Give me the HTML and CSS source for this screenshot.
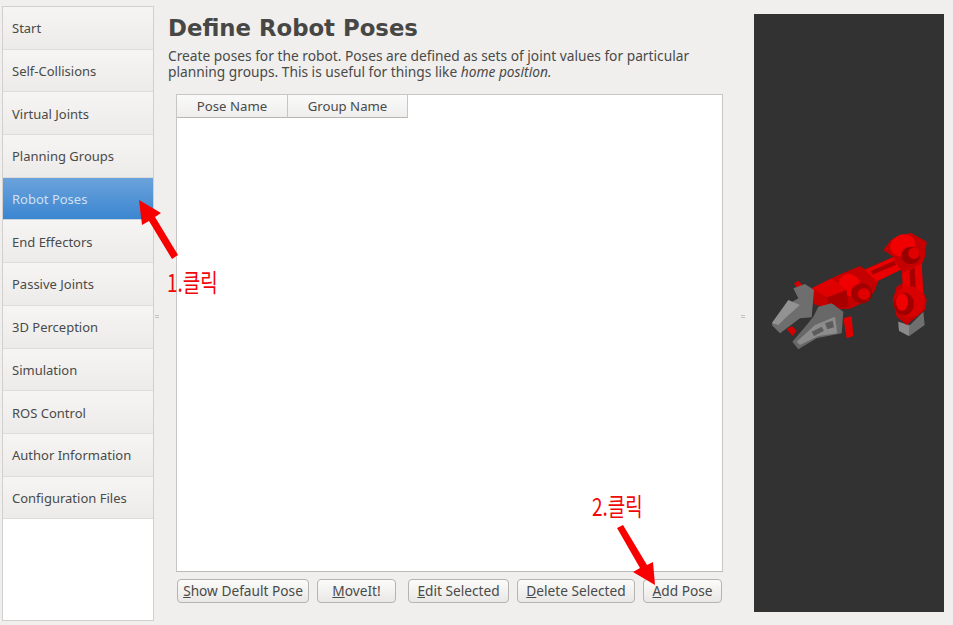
FILE: index.html
```html
<!DOCTYPE html>
<html lang="en">
<head>
<meta charset="utf-8">
<title>Define Robot Poses</title>
<link rel="stylesheet" href="styles.css">
</head>
<body>
<div class="app">
  <nav class="sidebar">
    <div class="nav-item">Start</div>
    <div class="nav-item">Self-Collisions</div>
    <div class="nav-item">Virtual Joints</div>
    <div class="nav-item">Planning Groups</div>
    <div class="nav-item active">Robot Poses</div>
    <div class="nav-item">End Effectors</div>
    <div class="nav-item">Passive Joints</div>
    <div class="nav-item">3D Perception</div>
    <div class="nav-item">Simulation</div>
    <div class="nav-item">ROS Control</div>
    <div class="nav-item">Author Information</div>
    <div class="nav-item">Configuration Files</div>
  </nav>
  <main class="content">
    <h1 class="title">Define Robot Poses</h1>
    <p class="desc">Create poses for the robot. Poses are defined as sets of joint values for particular<br>planning groups. This is useful for things like <em>home position.</em></p>
    <div class="table">
      <div class="thead">
        <div class="th th-pose">Pose Name</div>
        <div class="th th-group">Group Name</div>
      </div>
    </div>
    <div class="buttons">
      <button class="btn btn-default"><u>S</u>how Default Pose</button>
      <button class="btn btn-moveit"><u>M</u>oveIt!</button>
      <button class="btn btn-edit"><u>E</u>dit Selected</button>
      <button class="btn btn-delete"><u>D</u>elete Selected</button>
      <button class="btn btn-add"><u>A</u>dd Pose</button>
    </div>
  </main>
  <aside class="viewer">
    <svg class="robot" viewBox="12 0 570 450" width="190" height="150" aria-hidden="true">
      <polygon fill="#6f6f6f" points="445,335 480,345 520,305 524,345 478,378 447,362"/>
      <polygon fill="#8a8a8a" points="445,335 478,347 476,378 447,362"/>
      <polygon fill="#c40000" points="185,235 245,205 265,195 330,168 345,178 430,140 400,120 425,88 482,68 530,95 525,140 515,165 516,235 530,270 525,300 470,345 440,320 428,270 440,230 458,220 456,185 450,180 385,212 375,240 352,272 300,296 240,298 190,282"/>
      <polygon fill="#e60000" points="456,190 515,160 520,250 460,240"/>
      <polygon fill="#a40000" points="478,182 494,172 498,245 482,240"/>
      <circle fill="#d80000" cx="478" cy="275" r="46"/>
      <ellipse fill="#a00000" cx="462" cy="282" rx="30" ry="34"/>
      <ellipse fill="#f00000" cx="456" cy="276" rx="18" ry="26"/>
      <polygon fill="#ea0000" points="345,180 430,142 450,180 380,214"/>
      <polygon fill="#a80000" points="362,182 434,152 438,164 368,194"/>
      <ellipse fill="#f00000" cx="458" cy="106" rx="38" ry="32" transform="rotate(-25 458 106)"/>
      <ellipse fill="#980000" cx="482" cy="136" rx="28" ry="26"/>
      <ellipse fill="#e00000" cx="492" cy="130" rx="17" ry="17"/>
      <ellipse fill="#f00000" cx="298" cy="225" rx="32" ry="34" transform="rotate(-20 298 225)"/>
      <ellipse fill="#a00000" cx="335" cy="250" rx="32" ry="30"/>
      <ellipse fill="#e00000" cx="342" cy="252" rx="19" ry="17"/>
      <polygon fill="#e00000" points="185,235 245,205 290,240 232,262"/>
      <polygon fill="#a80000" points="232,262 290,240 296,290 240,298"/>
      <polygon fill="#d40000" points="132,220 145,212 158,225 145,240"/>
      <polygon fill="#d40000" points="110,358 125,348 140,362 128,378"/>
      <polygon fill="#e00000" points="280,325 305,318 310,378 290,385"/>
      <polygon fill="#6e6e6e" points="130,235 165,222 192,240 185,322 150,325 90,370 65,345 110,285 145,265"/>
      <polygon fill="#929292" points="65,340 115,270 150,285 110,320 85,345"/>
      <polygon fill="#686868" points="205,290 245,280 280,305 275,370 200,385 145,418 127,395 170,345 190,320"/>
      <polygon fill="#8c8c8c" points="195,345 255,320 262,370 205,378 150,405 140,395"/>
      <polygon fill="#5c5c5c" points="185,365 215,350 222,362 192,378"/>
      <polygon fill="#5c5c5c" points="225,340 248,332 252,352 232,358"/>
    </svg>
  </aside>
</div>
<div class="handle handle-left"></div>
<div class="handle handle-right"></div>
<svg class="arrow arrow-one" viewBox="0 0 50 70" width="50" height="70" aria-hidden="true">
  <polygon fill="#f80000" points="0,0 22,13 16,17 39,55 33,59 10,21 3,25"/>
</svg>
<svg class="arrow arrow-two" viewBox="0 0 50 70" width="50" height="70" aria-hidden="true">
  <polygon fill="#f80000" points="39,61 17,48 24,44 1,4 7,1 31,41 37,38"/>
</svg>
<div class="note note-one">1.클릭</div>
<div class="note note-two">2.클릭</div>
</body>
</html>
```
FILE: styles.css
```css
* { box-sizing: border-box; }
html, body { margin: 0; height: 100%; }
body {
  background: #f0efee;
  color: #4a4a48;
  font-family: "Noto Sans", "Liberation Sans", sans-serif;
  font-size: 13px;
  overflow: hidden;
  position: relative;
}
.app {
  display: flex;
  align-items: flex-start;
  height: 625px;
  padding: 6px 9px 0 2px;
}
.sidebar {
  width: 152px;
  height: 615px;
  flex: none;
  background: #fff;
  border: 1px solid #d2d0ce;
}
.nav-item {
  display: flex;
  align-items: center;
  height: 42.7px;
  padding: 1px 0 0 9px;
  background: linear-gradient(#f6f5f4, #ecebea);
  border-bottom: 1px solid #dddcda;
  font-size: 13px;
}
.nav-item.active {
  background: linear-gradient(#6ba2db, #3b86d1);
  border-bottom: 1px solid #c9d4df;
  color: #cfe0f2;
}
.content {
  width: 570px;
  flex: none;
  display: flex;
  flex-direction: column;
  padding-left: 14px;
}
.title {
  margin: 7px 0 0;
  font: bold 22.8px/30px "DejaVu Sans", sans-serif;
  color: #474745;
}
.desc {
  margin: 5px 0 0;
  font-size: 13.75px;
  line-height: 16px;
}
.table {
  width: 547px;
  height: 478px;
  margin: 14px 0 0 8px;
  background: #fff;
  border: 1px solid #c8c6c4;
  border-bottom-color: #bdbbb9;
}
.thead { display: flex; height: 23px; }
.th {
  display: flex;
  align-items: center;
  justify-content: center;
  background: linear-gradient(#fafafa, #efeeed);
  border-bottom: 1px solid #b8b6b3;
  border-right: 1px solid #c8c6c4;
  font-size: 13.2px;
}
.th-pose { width: 111px; }
.th-group { width: 120px; }
.buttons {
  display: flex;
  gap: 8px;
  margin: 7px 0 0 9px;
}
.btn {
  height: 24px;
  padding: 0 0 2px;
  background: linear-gradient(#fbfbfa, #e9e8e7);
  border: 1px solid #b6b4b1;
  border-radius: 4px;
  color: #4a4a48;
  font: 13.7px "Noto Sans", "Liberation Sans", sans-serif;
}
.btn-default { width: 132px; }
.btn-moveit { width: 79px; }
.btn-edit { width: 101px; margin-left: 4px; }
.btn-delete { width: 118px; }
.btn-add { width: 79px; }
.viewer {
  position: relative;
  width: 190px;
  height: 598px;
  flex: none;
  margin: 8px 0 0 30px;
  background: #323232;
}
.robot { position: absolute; left: 0; top: 196px; }
.handle {
  position: absolute;
  top: 315px;
  width: 4px;
  height: 3px;
  border-top: 1px solid #c4c2c0;
  border-bottom: 1px solid #c4c2c0;
}
.handle-left { left: 155px; }
.handle-right { left: 741px; }
.arrow { position: absolute; }
.arrow-one { left: 139px; top: 200px; }
.arrow-two { left: 616px; top: 524px; }
.note {
  position: absolute;
  color: #f00808;
  font: 400 19px/26px "Noto Sans CJK KR", sans-serif;
  transform: scaleY(1.3);
}
.note-one { left: 167px; top: 269px; }
.note-two { left: 592px; top: 493px; }
```
